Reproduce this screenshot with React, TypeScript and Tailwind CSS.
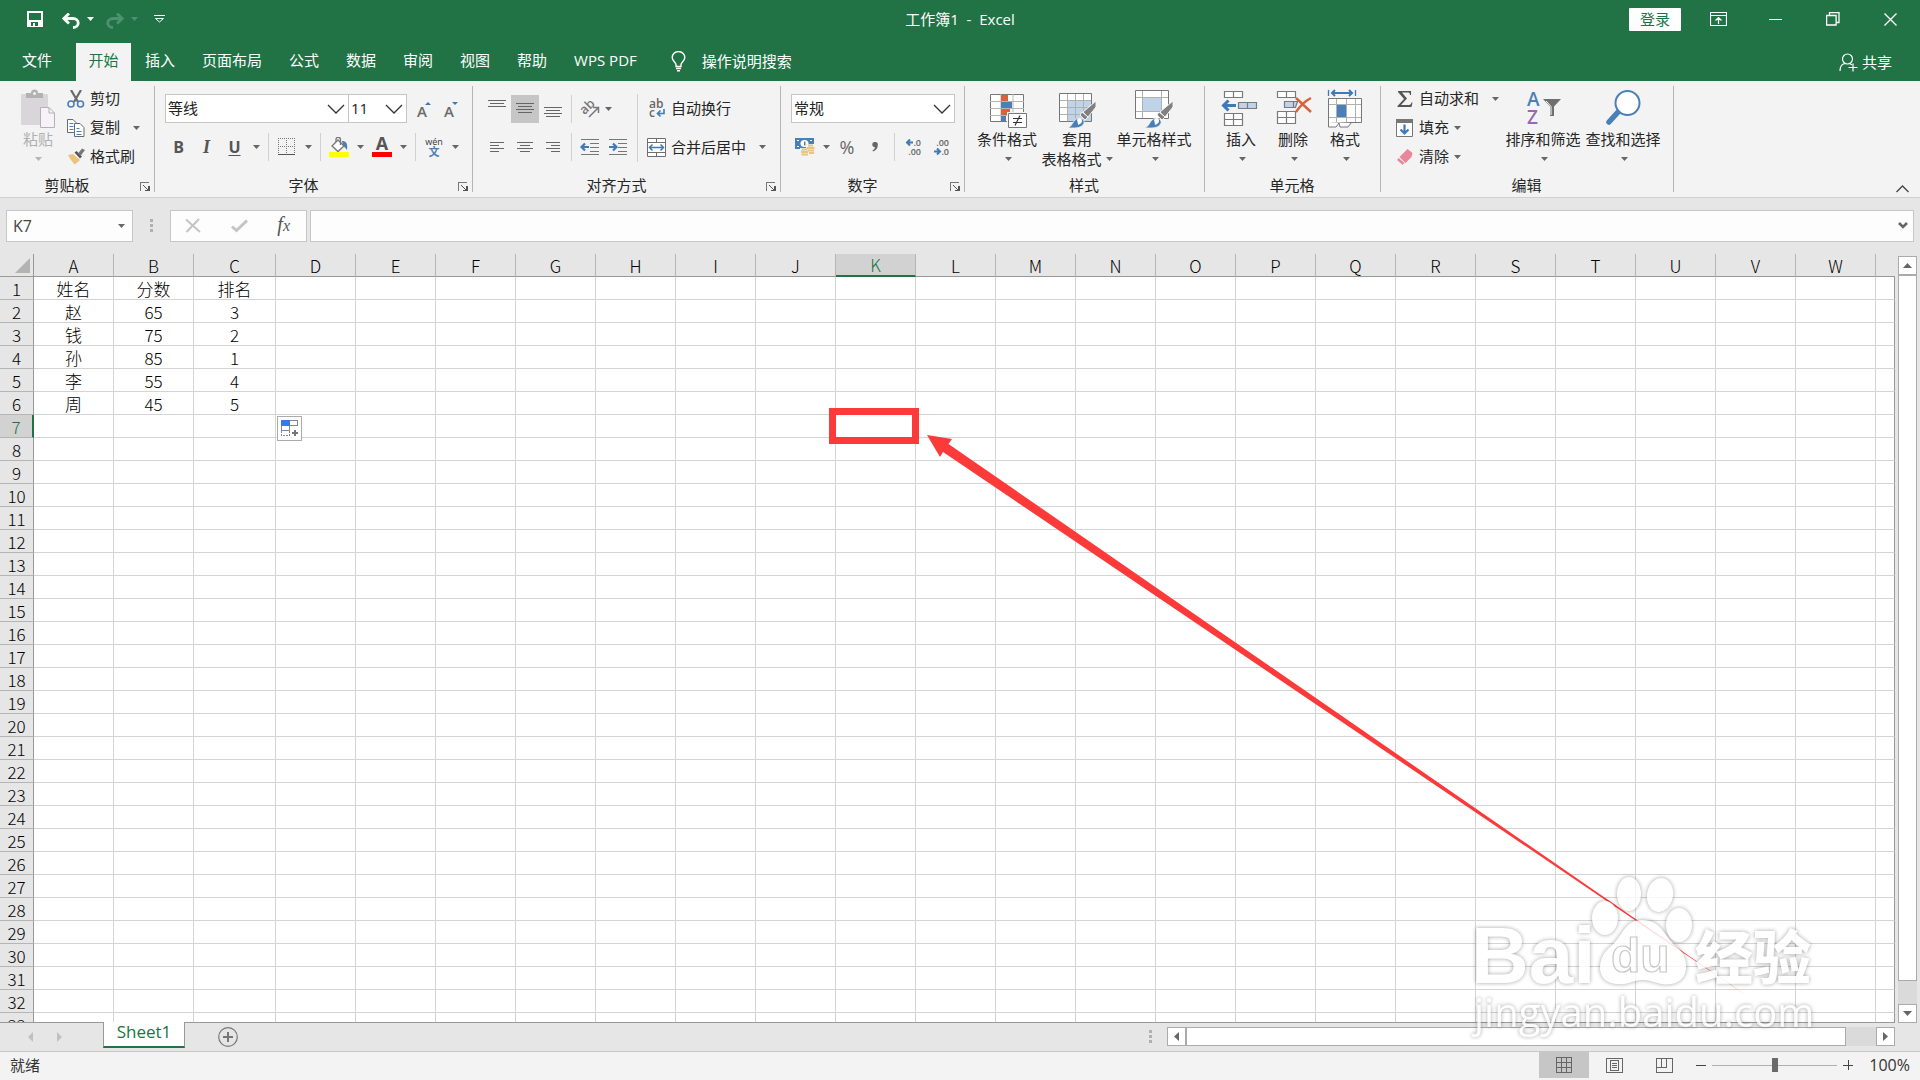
import React, { useState } from 'react';

interface IconProps {
  className?: string;
}

const columns = 'ABCDEFGHIJKLMNOPQRSTUVW'.split('');
const rowNumbers = Array.from({ length: 33 }, (_, i) => i + 1);

const cells: string[][] = [
  ['姓名', '分数', '排名'],
  ['赵', '65', '3'],
  ['钱', '75', '2'],
  ['孙', '85', '1'],
  ['李', '55', '4'],
  ['周', '45', '5']
];

const tabs = ['插入', '页面布局', '公式', '数据', '审阅', '视图', '帮助', 'WPS PDF'];

/* ---------- small shared pieces ---------- */

const Caret = ({ className = 'text-[#666]' }: IconProps) => (
  <svg width="7" height="4" viewBox="0 0 7 4" className={`shrink-0 ${className}`}>
    <path d="M0 0h7L3.5 4z" fill="currentColor" />
  </svg>
);

const CaretButton = ({ label, className = 'w-4' }: { label: string; className?: string }) => (
  <button aria-label={label} className={`flex h-7 items-center justify-center ${className}`}>
    <Caret />
  </button>
);

const Divider = ({ className = 'h-7' }: IconProps) => <div className={`w-px shrink-0 bg-[#d0d0d0] ${className}`}></div>;

const Grip = () => (
  <div className="flex flex-col gap-[2px]">
    <span className="h-[3px] w-[3px] bg-[#b0b0b0]"></span>
    <span className="h-[3px] w-[3px] bg-[#b0b0b0]"></span>
    <span className="h-[3px] w-[3px] bg-[#b0b0b0]"></span>
  </div>
);

const ToolButton = ({
  label,
  className = 'w-7',
  children
}: {
  label: string;
  className?: string;
  children: React.ReactNode;
}) => (
  <button aria-label={label} className={`flex h-7 shrink-0 items-center justify-center ${className}`}>
    {children}
  </button>
);

const Picker = ({
  label,
  options,
  className
}: {
  label: string;
  options: string[];
  className: string;
}) => (
  <div className={`relative h-[29px] ${className}`}>
    <select
      aria-label={label}
      className="h-full w-full appearance-none border border-[#c6c6c6] bg-white pl-[2px] text-[15px] text-[#222]"
    >
      {options.map((option) => (
        <option key={option}>{option}</option>
      ))}
    </select>
    <svg width="18" height="10" viewBox="0 0 18 10" className="pointer-events-none absolute right-1 top-[10px]">
      <path d="M1 1l8 8 8-8" fill="none" stroke="#333" strokeWidth="1.3" />
    </svg>
  </div>
);

const Group = ({
  title,
  launcher = false,
  className,
  children
}: {
  title: string;
  launcher?: boolean;
  className: string;
  children: React.ReactNode;
}) => (
  <section className={`my-[5px] flex shrink-0 flex-col border-r border-[#b5b5b5] ${className}`}>
    <div className="flex flex-1">{children}</div>
    <div className="flex h-[14px] items-center justify-center leading-[14px]">
      <span className={launcher ? 'flex-1 pr-[6px] text-center' : 'pr-px'}>{title}</span>
      {launcher && (
        <button aria-label={`${title}设置`} className="mr-[3px] mt-1">
          <svg width="11" height="10" viewBox="0 0 11 10" shapeRendering="crispEdges">
            <path d="M0.500 9V0.500H9" fill="none" stroke="#777" />
            <path d="M3 3h1v1h1v1h1v1h1v1h1V4h2v5H5V8h2V7H6V6H5V5H4V4H3z" fill="#555" />
          </svg>
        </button>
      )}
    </div>
  </section>
);

const BigButton = ({
  label,
  second,
  className,
  children
}: {
  label: string;
  second?: string;
  className: string;
  children: React.ReactNode;
}) => (
  <button className={`flex shrink-0 flex-col items-center pt-[3px] leading-[19px] ${className}`}>
    {children}
    <span className="mt-px whitespace-nowrap">{label}</span>
    <span className={second ? 'flex h-5 items-center gap-1 whitespace-nowrap' : 'flex h-5 items-center pl-[3px]'}>
      {second}
      <Caret />
    </span>
  </button>
);

/* ---------- icons ---------- */

const SaveIcon = () => (
  <svg width="16" height="16" viewBox="0 0 16 16" shapeRendering="crispEdges">
    <path d="M0 0h16v16H0zM2 2v7h12V2zM4 11v4h2v-3h2v3h3v-4z" fill="#fff" fillRule="evenodd" />
  </svg>
);

const UndoIcon = ({ className = '' }: IconProps) => (
  <svg width="18" height="16" viewBox="0 0 18 16" className={className}>
    <path d="M7 0.500L1.800 5.500 7 10.500M2.500 5.500H11a5 4.300 0 0 1 0 9" fill="none" stroke="currentColor" strokeWidth="2.800" />
  </svg>
);

const BulbIcon = () => (
  <svg width="15" height="21" viewBox="0 0 15 21" fill="none" stroke="#fff" strokeWidth="1.400">
    <path d="M5 15.500v-2C5 11.500 1.200 10 1.200 6.500a6.200 5.800 0 0 1 12.600 0C13.800 10 10 11.500 10 13.500v2zM5 17.500h5M6 19.800h3" />
  </svg>
);

const ShareIcon = () => (
  <svg width="19" height="19" viewBox="0 0 19 19" fill="none" stroke="#fff" strokeWidth="1.200">
    <circle cx="8.500" cy="6" r="5" />
    <path d="M1 18c0-4 2-7 5-7.500M11 10.800l2 1M14 10.500v8M9.500 14.500h9" />
  </svg>
);

const PasteIcon = () => (
  <svg width="36" height="40" viewBox="0 0 36 40">
    <rect x="1" y="5" width="27" height="31" rx="1" fill="#d9d6d9" />
    <path d="M6 9V4h5a3.500 3.500 0 0 1 7 0h5v5z" fill="#b3b1b3" />
    <circle cx="14.500" cy="4.500" r="1.500" fill="#f3f3f3" />
    <path d="M20.500 18.500H29l5.500 5.500v14.500h-14z" fill="#f6f2f8" stroke="#b3b1b3" />
    <path d="M29 18.500V24h5.500" fill="none" stroke="#b3b1b3" />
  </svg>
);

const CutIcon = () => (
  <svg width="18" height="18" viewBox="0 0 18 18">
    <path d="M4 0l7 12M14 0L7 12" stroke="#6a6a6a" strokeWidth="2.200" />
    <circle cx="4" cy="14" r="3" fill="none" stroke="#4a80ba" strokeWidth="1.600" />
    <circle cx="13.500" cy="14" r="3" fill="none" stroke="#4a80ba" strokeWidth="1.600" />
  </svg>
);

const CopyIcon = () => (
  <svg width="18" height="18" viewBox="0 0 18 18" fill="#fff" stroke="#6a6a6a">
    <path d="M0.500 0.500H6L9.500 4v9.500h-9z" />
    <path d="M2.500 4.500h4M2.500 7.500h4M2.500 10.500h4" stroke="#4a80ba" />
    <path d="M7.500 4.500H13L17 8.500v9H7.500z" />
    <path d="M9.500 9.500h3M9.500 12.500h5M9.500 15.500h5" stroke="#4a80ba" />
  </svg>
);

const FormatPainterIcon = () => (
  <svg width="18" height="17" viewBox="0 0 18 17">
    <path d="M1 7l5-1 7 6-5 4.500C5 14 3 11 1 7z" fill="#ecc27c" />
    <path d="M7.500 4.500l5.500 6 2-2L9.500 3z" fill="#555" />
    <path d="M11 5.500l4-5 3 1.500-4.500 6z" fill="#777" />
  </svg>
);

const GrowIcon = ({ down = false }: { down?: boolean }) => (
  <svg width="16" height="18" viewBox="0 0 16 18" className="overflow-visible">
    <text x="0" y="17" fontFamily="Open Sans" fontSize="15" fontWeight="600" fill="#6a6a6a">A</text>
    <path d={down ? 'M8 2h6l-3 3z' : 'M8 5h6l-3-3z'} fill="#3f77b5" />
  </svg>
);

const BordersIcon = () => (
  <svg width="18" height="18" viewBox="0 0 18 18" fill="none" stroke="#777" shapeRendering="crispEdges">
    <path d="M0 0.500h17M0 8.500h17M0.500 0v16M8.500 0v16M16.500 0v16" strokeDasharray="1 1" />
    <path d="M0 16.500h17" stroke="#555" />
  </svg>
);

const FillColorIcon = () => (
  <svg width="20" height="20" viewBox="0 0 20 20">
    <path d="M13 4c4 0 6 2 5 9-1-1-2-3-4-4z" fill="#4a80ba" />
    <path d="M9 3l6 6-6 5.500L3 9z" fill="#fff" stroke="#777" strokeWidth="1.300" />
    <path d="M7 5V2.500a2 2 0 0 1 4.500 0V8" fill="none" stroke="#777" strokeWidth="1.300" />
    <path d="M0 15h20v5H0z" fill="#ff0" />
  </svg>
);

const FontColorIcon = () => (
  <svg width="20" height="20" viewBox="0 0 20 20" className="overflow-visible">
    <text x="10" y="13" textAnchor="middle" fontFamily="Open Sans" fontSize="18" fontWeight="700" fill="#555">A</text>
    <path d="M0 15h20v5H0z" fill="#f00" />
  </svg>
);

const PhoneticIcon = () => (
  <svg width="18" height="20" viewBox="0 0 18 20" className="overflow-visible">
    <text x="9" y="8" textAnchor="middle" fontFamily="Open Sans" fontSize="9" fill="#333">wén</text>
    <text x="9" y="19" textAnchor="middle" fontFamily="Noto Sans CJK SC" fontSize="11" fontWeight="700" fill="#4a80ba">文</text>
  </svg>
);

const linePaths: Record<string, string> = {
  top: 'M0 5.500h18M2 8.500h14M0 11.500h18',
  middle: 'M0 4.500h18M2 7.500h14M0 10.500h18M2 13.500h14',
  bottom: 'M0 8.500h18M2 11.500h14M0 14.500h18M2 17.500h14',
  left: 'M2 4.500h14M2 7.500h9M2 10.500h14M2 13.500h9',
  center: 'M1 4.500h16M4 7.500h10M1 10.500h16M4 13.500h10',
  right: 'M2 4.500h14M7 7.500h9M2 10.500h14M7 13.500h9'
};

const LinesIcon = ({ kind }: { kind: string }) => (
  <svg width="18" height="19" viewBox="0 0 18 19" stroke="#666" shapeRendering="crispEdges">
    <path d={linePaths[kind]} />
  </svg>
);

const OrientationIcon = () => (
  <svg width="20" height="18" viewBox="0 0 20 18" className="overflow-visible">
    <text x="2" y="13" transform="rotate(-45 6 11)" fontFamily="Open Sans" fontSize="13" fontWeight="600" fill="#777">ab</text>
    <path d="M9 17l9-9M13 7.500h5.500V13" fill="none" stroke="#777" strokeWidth="1.500" />
  </svg>
);

const IndentIcon = ({ right = false }: { right?: boolean }) => (
  <svg width="20" height="18" viewBox="0 0 20 18">
    <path d="M1 1.500h18M10 5.500h9M10 9.500h9M10 13.500h9M1 16.500h18" stroke="#777" shapeRendering="crispEdges" />
    <path d={right ? 'M1 9h7M5 5.500L8.500 9 5 12.500' : 'M9 9H2M5 5.500L1.500 9 5 12.500'} fill="none" stroke="#4079b8" strokeWidth="2.200" />
  </svg>
);

const WrapIcon = () => (
  <svg width="18" height="20" viewBox="0 0 18 20" className="overflow-visible">
    <text x="1" y="9" fontFamily="Open Sans" fontSize="12" fontWeight="600" fill="#666">ab</text>
    <text x="1" y="18" fontFamily="Open Sans" fontSize="12" fontWeight="600" fill="#666">c</text>
    <path d="M16 10v4.500H9.500M12.500 11.500l-3 3 3 3" fill="none" stroke="#4079b8" strokeWidth="1.600" />
  </svg>
);

const MergeIcon = () => (
  <svg width="19" height="19" viewBox="0 0 19 19" fill="#fff" stroke="#6f6f6f">
    <path d="M0.500 0.500h18v18H0.500zM0.500 4.500h18M0.500 14.500h18M9.500 0v4.500M9.500 14.500v4" />
    <path d="M3 9.500h13M5.500 6.500l-3 3 3 3M13.500 6.500l3 3-3 3" fill="none" stroke="#4079b8" strokeWidth="1.500" />
  </svg>
);

const CurrencyIcon = () => (
  <svg width="20" height="20" viewBox="0 0 20 20">
    <path d="M0 1h19v11H0z" fill="#4a80ba" />
    <path d="M2 3.500h2M2 9.500h2M15 3.500h2" stroke="#fff" />
    <ellipse cx="9.500" cy="6.500" rx="4" ry="3.500" fill="#fff" />
    <path d="M9 4.500h1.500v4H9z" fill="#4a80ba" />
    <path d="M11 7h9v12H5v-8h6z" fill="#f3f3f3" />
    <path d="M13 8.500h5M12 11h7.500M13 13.500h6M6.500 12.500h6M6 15h7M6.500 17.500h6.500M14 16h5" stroke="#ecc27c" strokeWidth="1.800" />
  </svg>
);

const DecimalIcon = ({ less = false }: { less?: boolean }) => (
  <svg width="18" height="18" viewBox="0 0 18 18" className="overflow-visible">
    <text x="16" y="8" textAnchor="end" fontFamily="Open Sans" fontSize="9" fontWeight="600" fill="#666">{less ? '.00' : '.0'}</text>
    <text x="16" y="17" textAnchor="end" fontFamily="Open Sans" fontSize="9" fontWeight="600" fill="#666">{less ? '.0' : '.00'}</text>
    <path
      d={less ? 'M1 13.500h5M4 10.500l3 3-3 3' : 'M8 4.500H3M5 1.500l-3 3 3 3'}
      fill="none"
      stroke="#4079b8"
      strokeWidth="2"
    />
  </svg>
);

const BrushShape = () => (
  <g>
    <path d="M39 12v6L31 28l-5-5z" fill="#808080" stroke="#f3f3f3" />
    <path d="M25 23l6 5-3 3-5-5z" fill="#808080" stroke="#f3f3f3" />
    <path d="M11 39c4-2 4-5 7-8 3-3 8-2 9 1 1 4-4 7-9 7z" fill="#4a80ba" stroke="#f3f3f3" strokeWidth="0.800" />
    <path d="M20 31c1-2 4-2.500 5 0 .5 2-1 4-4 5 0-2-.5-3-1-5z" fill="#fff" />
  </g>
);

const ConditionalIcon = () => (
  <svg width="40" height="40" viewBox="0 0 40 40">
    <path d="M3.500 5.500h33v27h-33z" fill="#fff" stroke="#777" />
    <path d="M3 12.500h34M3 19.500h34M3 26.500h34M14 5v27M26 5v27" stroke="#b5b5b5" />
    <path d="M14 6h7v6h-7zM14 20h9v6h-9z" fill="#d9623b" />
    <path d="M14 13h11v6H14zM14 27h5v5h-5z" fill="#4a80ba" />
    <path d="M20 23h20v17H20z" fill="#f3f3f3" />
    <path d="M21.500 24.500h18v14h-18z" fill="#fff" stroke="#777" />
    <path d="M26 29.500h9M26 33.500h9M33 26.500l-5 10" stroke="#333" strokeWidth="1.200" />
  </svg>
);

const TableFormatIcon = () => (
  <svg width="40" height="40" viewBox="0 0 40 40">
    <path d="M2.500 4.500h32v28h-32z" fill="#fff" stroke="#777" />
    <path d="M11 12h23v20H11z" fill="#c0d4e9" />
    <path d="M3 11.500h31M3 18.500h31M3 25.500h31M10.500 5v27M18.500 5v27M26.500 5v27" stroke="#b0b0b0" />
    <BrushShape />
  </svg>
);

const CellStyleIcon = () => (
  <svg width="40" height="40" viewBox="0 0 40 40">
    <path d="M1.500 1.500h33v28h-33z" fill="#fff" stroke="#777" />
    <path d="M2 8.500h32M2 22.500h32M8.500 2v27M27.500 2v27" stroke="#b0b0b0" />
    <path d="M9 9h18v13H9z" fill="#c0d4e9" />
    <BrushShape />
  </svg>
);

const InsertIcon = () => (
  <svg width="40" height="40" viewBox="2 0 40 40" fill="#fff" stroke="#7a7a7a" strokeWidth="1.200">
    <path d="M5.500 2.500h18v6h-18zM14.500 2.500v6M5.500 24.500h18v12h-18zM5.500 30.500h18M14.500 24.500v12" />
    <path d="M19.500 13.500h18v6h-18zM28.500 13.500v6" fill="#c0d4e9" />
    <path d="M17 16.500H5M9.500 11.500l-5 5 5 5" fill="none" stroke="#4079b8" strokeWidth="3" />
  </svg>
);

const DeleteIcon = () => (
  <svg width="40" height="40" viewBox="0 0 40 40" fill="#fff" stroke="#7a7a7a" strokeWidth="1.200">
    <path d="M4.500 2.500h18v6h-18zM13.500 2.500v6M4.500 22.500h18v12h-18zM4.500 28.500h18M13.500 22.500v12" />
    <path d="M11.500 12.500h13l-2 6h-11zM20.500 12.500v6" fill="#c0d4e9" />
    <path d="M23 9l15 14M38 9c-6 3-11 8-15 14" fill="none" stroke="#d9623b" strokeWidth="2.400" />
  </svg>
);

const FormatCellsIcon = () => (
  <svg width="40" height="40" viewBox="0 0 40 40">
    <path d="M3.500 1v6M30.500 1v6" stroke="#4079b8" strokeWidth="1.300" />
    <path d="M7 4h20M10 1L7 4l3 3M24 1l3 3-3 3" fill="none" stroke="#4079b8" strokeWidth="2" />
    <path d="M3.500 9.500h33v24h-33z" fill="#fff" stroke="#777" />
    <path d="M4 15.500h32M4 28.500h32M11.500 10v23M21.500 10v23M30.500 10v23" stroke="#b0b0b0" />
    <path d="M12 16h9v12h-9z" fill="#4a80ba" />
    <path d="M3.500 33v5H11l3-4 1 4h8l3-4" fill="#fff" stroke="#777" />
  </svg>
);

const FillDownIcon = () => (
  <svg width="18" height="18" viewBox="0 0 18 18">
    <path d="M0.500 0.500h16v17H0.500z" fill="#fff" stroke="#777" />
    <path d="M0 0h17v4H0z" fill="#777" />
    <path d="M8.500 5.500v9M4.500 10.500l4 4 4-4" fill="none" stroke="#4079b8" strokeWidth="2.200" />
  </svg>
);

const EraserIcon = () => (
  <svg width="18" height="17" viewBox="0 0 18 17">
    <path d="M11.500 1l5 4-1 4-6 6-6-6z" fill="#e8869a" />
    <path d="M2.700 10l5.800 5-2 1.800L1 12z" fill="#e8869a" />
  </svg>
);

const SortIcon = () => (
  <svg width="40" height="40" viewBox="0 0 40 40" className="overflow-visible">
    <text x="4" y="17" fontFamily="Open Sans" fontSize="19" fontWeight="600" fill="#4a80ba">A</text>
    <text x="4" y="35" fontFamily="Open Sans" fontSize="19" fontWeight="600" fill="#9a66b5">Z</text>
    <path d="M20 10h18l-7 7.500V27h-4v-9.500z" fill="#6f6f6f" />
    <path d="M23 12l5 5.500V26" fill="none" stroke="#fff" />
  </svg>
);

const FindIcon = () => (
  <svg width="40" height="40" viewBox="0 0 40 40">
    <path d="M16 22L6 33" stroke="#4a80ba" strokeWidth="5.500" strokeLinecap="round" />
    <circle cx="24.500" cy="14" r="12" fill="#fff" stroke="#4a80ba" strokeWidth="2" />
  </svg>
);

/* ---------- page sections ---------- */

const TitleBar = () => (
  <header className="grid h-[43px] shrink-0 grid-cols-[1fr_auto_1fr] pb-[5px] text-white">
    <div className="flex items-center pl-[27px]">
      <button aria-label="保存"><SaveIcon /></button>
      <button aria-label="撤消" className="ml-[19px] mt-1"><UndoIcon /></button>
      <button aria-label="撤消列表" className="ml-[7px]"><Caret className="text-white" /></button>
      <button aria-label="恢复" className="ml-3 mt-1 text-[#4f9070]"><UndoIcon className="-scale-x-100" /></button>
      <button aria-label="恢复列表" className="ml-[7px]"><Caret className="text-[#4f9070]" /></button>
      <button aria-label="自定义快速访问工具栏" className="ml-4">
        <svg width="11" height="8" viewBox="0 0 11 8" fill="none" stroke="#fff">
          <path d="M0 0.500h11M1.500 3.500h8l-4 3.500z" />
        </svg>
      </button>
    </div>
    <h1 className="flex items-center whitespace-pre text-[15px]">工作簿1  -  Excel</h1>
    <div className="flex items-center justify-end pr-[23px]">
      <button className="h-[23px] w-[52px] rounded-[1px] bg-white text-[15px] leading-[23px] text-[#217346]">登录</button>
      <button aria-label="功能区显示选项" className="ml-[29px]">
        <svg width="17" height="14" viewBox="0 0 17 14" fill="none" stroke="#fff">
          <path d="M0.500 0.500h16v13H0.500zM1 3.500h15M8.500 12V6M5.500 8.500l3-3 3 3" strokeWidth="1.200" />
        </svg>
      </button>
      <button aria-label="最小化" className="ml-[42px] h-[1px] w-[13px] bg-white"></button>
      <button aria-label="向下还原" className="ml-11">
        <svg width="14" height="14" viewBox="0 0 14 14" fill="none" stroke="#fff" strokeWidth="1.300">
          <path d="M0.600 3.500h9.500v9.500H0.600zM3.500 3.500V0.600h9.500V10.500h-3" />
        </svg>
      </button>
      <button aria-label="关闭" className="ml-11">
        <svg width="13" height="13" viewBox="0 0 13 13" stroke="#fff" strokeWidth="1.400">
          <path d="M0.500 0.500l12 12M12.500 0.500l-12 12" />
        </svg>
      </button>
    </div>
  </header>
);

const TabBar = () => (
  <nav className="flex h-[38px] shrink-0 items-stretch whitespace-nowrap pr-7 text-[15px] text-white">
    <button className="w-[76px] pb-1 pr-[2px]">文件</button>
    <button className="w-[55px] bg-[#f3f3f3] pb-1 text-[#217346]">开始</button>
    <div className="flex gap-[27px] pb-1 pl-[14px]">
      {tabs.map((tab) => (
        <button key={tab}>{tab}</button>
      ))}
    </div>
    <button className="flex items-center gap-4 pb-[2px] pl-[34px]">
      <BulbIcon />
      操作说明搜索
    </button>
    <button className="ml-auto flex items-center gap-1">
      <ShareIcon />
      共享
    </button>
  </nav>
);

const Ribbon = () => (
  <div className="flex h-[117px] shrink-0 border-b border-[#d0d0d0] bg-[#f3f3f3] text-[15px] text-[#262626]">
    <Group title="剪贴板" launcher className="w-[155px]">
      <button className="ml-[20px] flex w-9 flex-col items-center pt-[3px] leading-[19px] text-[#b0b0b0]">
        <PasteIcon />
        <span className="mt-px">粘贴</span>
        <span className="flex h-5 items-center"><Caret className="text-[#b5b5b5]" /></span>
      </button>
      <div className="-mt-[2px] ml-[11px] flex flex-col">
        <button className="flex h-[29px] items-center gap-[5px]"><CutIcon />剪切</button>
        <div className="flex h-[29px] items-center">
          <button className="flex items-center gap-[5px]"><CopyIcon />复制</button>
          <CaretButton label="复制选项" className="ml-[6px] w-5" />
        </div>
        <button className="flex h-[29px] items-center gap-[5px]"><FormatPainterIcon />格式刷</button>
      </div>
    </Group>

    <Group title="字体" launcher className="w-[318px]">
      <div className="flex flex-col gap-[10px] pl-[10px] pt-2">
        <div className="flex items-center">
          <Picker label="字体" options={['等线', '宋体', '微软雅黑']} className="w-[184px]" />
          <Picker label="字号" options={['11', '12', '14']} className="-ml-px w-[59px]" />
          <ToolButton label="增大字号" className="ml-1 w-[27px]"><GrowIcon /></ToolButton>
          <ToolButton label="减小字号" className="w-[27px]"><GrowIcon down /></ToolButton>
        </div>
        <div className="flex items-center">
          <ToolButton label="加粗" className="w-[27px]"><b className="text-base text-[#555]">B</b></ToolButton>
          <ToolButton label="倾斜" className="w-[29px]">
            <i className="font-['Liberation_Serif',serif] text-lg font-bold text-[#555]">I</i>
          </ToolButton>
          <ToolButton label="下划线" className="w-[27px]"><b className="text-base text-[#555] underline underline-offset-2">U</b></ToolButton>
          <CaretButton label="下划线样式" />
          <Divider className="ml-[4px] h-7" />
          <ToolButton label="边框" className="ml-1 w-7"><BordersIcon /></ToolButton>
          <CaretButton label="边框样式" className="w-[14px]" />
          <Divider className="ml-[5px] h-7" />
          <ToolButton label="填充颜色" className="ml-1 w-7"><FillColorIcon /></ToolButton>
          <CaretButton label="填充颜色选项" className="w-[14px]" />
          <ToolButton label="字体颜色" className="w-[29px]"><FontColorIcon /></ToolButton>
          <CaretButton label="字体颜色选项" className="w-[14px]" />
          <Divider className="ml-[5px] h-7" />
          <ToolButton label="拼音" className="ml-1 w-7"><PhoneticIcon /></ToolButton>
          <CaretButton label="拼音选项" className="w-[14px]" />
        </div>
      </div>
    </Group>

    <Group title="对齐方式" launcher className="w-[308px]">
      <div className="flex flex-col gap-[10px] pl-[10px] pt-2">
        <div className="flex h-[29px] items-center">
          <ToolButton label="顶端对齐"><span className="pb-2"><LinesIcon kind="top" /></span></ToolButton>
          <ToolButton label="垂直居中" className="w-7 bg-[#c6c6c6]"><LinesIcon kind="middle" /></ToolButton>
          <ToolButton label="底端对齐"><LinesIcon kind="bottom" /></ToolButton>
          <Divider className="mx-1 h-7" />
          <ToolButton label="方向"><OrientationIcon /></ToolButton>
          <CaretButton label="方向选项" className="w-2" />
        </div>
        <div className="flex items-center">
          <ToolButton label="左对齐"><LinesIcon kind="left" /></ToolButton>
          <ToolButton label="居中"><LinesIcon kind="center" /></ToolButton>
          <ToolButton label="右对齐"><LinesIcon kind="right" /></ToolButton>
          <Divider className="mx-1 h-7" />
          <ToolButton label="减少缩进量"><IndentIcon /></ToolButton>
          <ToolButton label="增加缩进量"><IndentIcon right /></ToolButton>
        </div>
      </div>
      <Divider className="ml-[5px] mt-2 h-[68px]" />
      <div className="flex flex-col gap-[10px] pl-[9px] pt-2">
        <button className="flex h-[29px] items-center gap-[5px]"><span className="pl-px"><WrapIcon /></span>自动换行</button>
        <div className="flex items-center">
          <button className="flex items-center gap-[5px]"><MergeIcon />合并后居中</button>
          <CaretButton label="合并选项" className="ml-2 w-4" />
        </div>
      </div>
    </Group>

    <Group title="数字" launcher className="w-[184px]">
      <div className="flex flex-col gap-[10px] pl-[10px] pt-2">
        <Picker label="数字格式" options={['常规', '数值', '货币']} className="w-[164px]" />
        <div className="flex items-center">
          <ToolButton label="会计数字格式"><CurrencyIcon /></ToolButton>
          <CaretButton label="会计格式选项" className="w-[14px]" />
          <ToolButton label="百分比样式"><span className="text-lg text-[#666]">%</span></ToolButton>
          <ToolButton label="千位分隔样式">
            <svg width="6" height="10" viewBox="0 0 6 10">
              <path d="M3 0a2.500 2.500 0 0 1 2.800 3C5.800 6 4 8.500 1 9.500L0.500 8.500C2 7.500 3 6.500 3 5.300 1.500 5.300 0.300 4 0.300 2.700A2.500 2.500 0 0 1 3 0z" fill="#666" />
            </svg>
          </ToolButton>
          <Divider className="mx-[5px] h-7" />
          <ToolButton label="增加小数位数"><DecimalIcon /></ToolButton>
          <ToolButton label="减少小数位数"><DecimalIcon less /></ToolButton>
        </div>
      </div>
    </Group>

    <Group title="样式" className="w-[240px]">
      <BigButton label="条件格式" className="ml-[9px] w-[66px]"><ConditionalIcon /></BigButton>
      <BigButton label="套用" second="表格格式" className="w-[74px]"><TableFormatIcon /></BigButton>
      <BigButton label="单元格样式" className="w-20"><CellStyleIcon /></BigButton>
    </Group>

    <Group title="单元格" className="w-[176px]">
      <BigButton label="插入" className="ml-[10px] w-[52px]"><InsertIcon /></BigButton>
      <BigButton label="删除" className="w-[52px]"><DeleteIcon /></BigButton>
      <BigButton label="格式" className="w-[52px]"><FormatCellsIcon /></BigButton>
    </Group>

    <Group title="编辑" className="w-[293px]">
      <div className="-mt-[2px] flex w-[124px] shrink-0 flex-col whitespace-nowrap pl-[15px]">
        <div className="flex h-[29px] items-center">
          <button className="flex items-center gap-[5px]">
            <svg width="18" height="18" viewBox="0 0 18 18">
              <path d="M2 1h13v4h-1c0-2-1-2.500-2-2.500H6l5 6-6 6.500h8c1.500 0 2-1 2.500-2.500h1L15.500 17H1.500v-1L8 9 2 2z" fill="#555" />
            </svg>
            自动求和
          </button>
          <CaretButton label="自动求和选项" className="ml-2 w-4" />
        </div>
        <button className="flex h-[29px] items-center gap-[5px]"><FillDownIcon />填充<Caret /></button>
        <button className="flex h-[29px] items-center gap-[5px]"><EraserIcon />清除<Caret /></button>
      </div>
      <BigButton label="排序和筛选" className="w-[76px]"><SortIcon /></BigButton>
      <BigButton label="查找和选择" className="ml-1 w-[76px]"><FindIcon /></BigButton>
    </Group>

    <button aria-label="折叠功能区" className="mb-1 ml-auto mr-[11px] self-end">
      <svg width="13" height="8" viewBox="0 0 13 8" fill="none" stroke="#444" strokeWidth="1.300">
        <path d="M0.500 7l6-6 6 6" />
      </svg>
    </button>
  </div>
);

const FormulaBar = ({ cell, onCellChange }: { cell: string; onCellChange: (value: string) => void }) => (
  <div className="flex h-14 shrink-0 items-center pb-[1px] pl-[6px] pr-[6px]">
    <div className="flex h-8 w-[127px] items-center border border-[#c6c6c6] bg-[#fdfdfd] pl-[6px] pr-[7px]">
      <input
        aria-label="名称框"
        value={cell}
        onChange={(e) => onCellChange(e.target.value)}
        className="min-w-0 flex-1 text-base text-[#444] outline-none"
      />
      <Caret />
    </div>
    <div className="flex w-[37px] justify-center"><Grip /></div>
    <div className="flex h-8 w-[137px] items-center justify-between border border-[#c6c6c6] bg-[#fdfdfd] px-[14px]">
      <button aria-label="取消">
        <svg width="16" height="15" viewBox="0 0 16 15" stroke="#c4c4c4" strokeWidth="2">
          <path d="M1 1.500l14 12.500M14 1L1.500 14" />
        </svg>
      </button>
      <button aria-label="输入">
        <svg width="17" height="14" viewBox="0 0 17 14" fill="none" stroke="#c4c4c4" strokeWidth="3">
          <path d="M1 7.500l4.500 4L16 1.500" />
        </svg>
      </button>
      <button aria-label="插入函数" className="pr-[2px] font-['Liberation_Serif',serif] text-xl italic leading-5 text-[#555]">
        f<span className="text-base">x</span>
      </button>
    </div>
    <div className="ml-[3px] flex h-8 flex-1 items-center border border-[#c6c6c6] bg-[#fdfdfd] pl-2 pr-[5px]">
      <input aria-label="编辑栏" className="min-w-0 flex-1 text-[15px] outline-none" />
      <button aria-label="展开编辑栏">
        <svg width="10" height="7" viewBox="0 0 10 7" fill="none" stroke="#666" strokeWidth="2.600">
          <path d="M1 1l4 4 4-4" />
        </svg>
      </button>
    </div>
  </div>
);

const Annotation = () => (
  <>
    <div className="absolute left-[829px] top-[154px] h-9 w-[90px] border-[7px] border-[#fc3a3a] bg-white"></div>
    <svg width="830" height="570" viewBox="920 430 830 570" className="absolute left-[920px] top-[176px]">
      <path d="M927 435l25 4-3.500 5L1747 996 943 452l-3 5z" fill="#fc3a3a" />
    </svg>
  </>
);

const Sheet = () => (
  <main className="flex min-h-0 flex-1 pr-[3px]">
    <div className="relative min-w-0 flex-1 overflow-hidden border-b border-[#999]">
      <table className="w-full table-fixed border-separate border-spacing-0 font-['Noto_Sans_CJK_SC',sans-serif] text-[17px] leading-5 text-black">
        <colgroup>
          <col className="w-[34px]" />
          {columns.map((name) => (
            <col key={name} className={name === 'C' ? 'w-[82px]' : 'w-20'} />
          ))}
          <col />
        </colgroup>
        <thead>
          <tr>
            <th aria-label="全选" className="h-[23px] border-b border-r border-[#999] p-0">
              <svg width="15" height="15" viewBox="0 0 15 15" className="ml-auto mr-[3px]">
                <path d="M15 0v15H0z" fill="#b3b3b3" />
              </svg>
            </th>
            {columns.map((name) => (
              <th
                key={name}
                className={
                  name === 'K'
                    ? 'h-[23px] border-b-2 border-r border-b-[#217346] border-r-[#b5b5b5] bg-[#d2d2d2] p-0 pt-px font-light text-[#217346]'
                    : 'h-[23px] border-b border-r border-b-[#999] border-r-[#b5b5b5] p-0 pt-[2px] font-light'
                }
              >
                {name}
              </th>
            ))}
            <th className="h-[23px] border-b border-[#999] p-0"></th>
          </tr>
        </thead>
        <tbody>
          {rowNumbers.map((n) => (
            <tr key={n} className="bg-white">
              <th
                className={
                  n === 7
                    ? 'h-[23px] border-b border-r-2 border-b-[#b5b5b5] border-r-[#217346] bg-[#d2d2d2] p-0 pt-[2px] font-light text-[#217346]'
                    : 'h-[23px] border-b border-r border-b-[#b5b5b5] border-r-[#999] bg-[#e6e6e6] p-0 pt-[2px] font-light'
                }
              >
                {n}
              </th>
              {columns.map((name, i) => (
                <td key={name} className="h-[23px] border-b border-r border-[#d4d4d4] p-0 pt-[2px] text-center font-light">
                  {cells[n - 1]?.[i]}
                </td>
              ))}
              <td className="h-[23px] border-b border-r border-b-[#d4d4d4] border-r-[#999] p-0"></td>
            </tr>
          ))}
        </tbody>
      </table>

      {/* Autofill options tag */}
      <button aria-label="自动填充选项" className="absolute left-[277px] top-[162px] flex h-[25px] w-[25px] items-center justify-center border border-[#ababab] bg-white">
        <svg width="17" height="17" viewBox="0 0 17 17" fill="none" stroke="#888" shapeRendering="crispEdges">
          <path d="M0.500 0.500h16v5H0.500zM0.500 5.500h8v5h-8z" />
          <path d="M0.500 0.500h8v5h-8z" fill="#3b78e7" stroke="#3b78e7" />
          <path d="M0.500 11v4.500h8V11" strokeDasharray="2 1" />
          <path d="M13.500 10v6M10.500 13h6" stroke="#777" strokeWidth="2" />
        </svg>
      </button>

      <Annotation />
    </div>

    {/* Vertical scrollbar */}
    <div className="ml-[3px] mt-[2px] flex w-[19px] flex-col bg-[#dadada]">
      <button aria-label="向上滚动" className="flex h-[19px] items-center justify-center border border-[#ababab] bg-white">
        <svg width="9" height="5" viewBox="0 0 9 5"><path d="M0 5h9L4.500 0z" fill="#666" /></svg>
      </button>
      <div className="flex-1 border border-[#ababab] bg-white"></div>
      <button aria-label="向下滚动" className="mt-[23px] flex h-[19px] items-center justify-center border border-[#ababab] bg-white">
        <svg width="9" height="5" viewBox="0 0 9 5"><path d="M0 0h9L4.500 5z" fill="#666" /></svg>
      </button>
    </div>
  </main>
);

const SheetTabs = () => (
  <div className="flex h-7 shrink-0 items-center pr-[25px]">
    <button aria-label="上一个工作表" className="ml-[28px]">
      <svg width="5" height="10" viewBox="0 0 5 10"><path d="M5 0v10L0 5z" fill="#c0c0c0" /></svg>
    </button>
    <button aria-label="下一个工作表" className="ml-6">
      <svg width="5" height="10" viewBox="0 0 5 10"><path d="M0 0v10l5-5z" fill="#c0c0c0" /></svg>
    </button>
    <button className="relative -mt-px ml-[41px] h-[26px] w-[82px] self-start border-b-2 border-l border-r border-b-[#217346] border-l-[#999] border-r-[#999] bg-white pb-1 text-[17px] font-medium leading-5 text-[#217346]">
      Sheet1
    </button>
    <button aria-label="新工作表" className="ml-[33px]">
      <svg width="20" height="20" viewBox="0 0 20 20" fill="none" stroke="#777">
        <circle cx="10" cy="10" r="9.300" strokeWidth="1.200" />
        <path d="M10 5v10M5 10h10" strokeWidth="2" />
      </svg>
    </button>
    <div className="ml-auto flex w-[746px] items-center pb-px">
      <Grip />
      <div className="ml-[15px] flex h-[19px] flex-1 bg-[#dadada]">
        <button aria-label="向左滚动" className="flex w-[19px] items-center justify-center border border-[#ababab] bg-white">
          <svg width="5" height="9" viewBox="0 0 5 9"><path d="M5 0v9L0 4.500z" fill="#666" /></svg>
        </button>
        <div className="flex-1 border border-[#ababab] bg-white"></div>
        <button aria-label="向右滚动" className="ml-[30px] flex w-[19px] items-center justify-center border border-[#ababab] bg-white">
          <svg width="5" height="9" viewBox="0 0 5 9"><path d="M0 0v9l5-4.500z" fill="#666" /></svg>
        </button>
      </div>
    </div>
  </div>
);

const StatusBar = ({ zoom, onZoom }: { zoom: number; onZoom: (value: number) => void }) => (
  <footer className="flex h-[29px] shrink-0 items-center border-t border-[#c6c6c6] bg-[#f3f3f3] pb-[2px] pl-[10px] pr-[10px] text-[15px] text-[#333]">
    <span>就绪</span>
    <button aria-label="普通" className="ml-auto flex h-[26px] w-[50px] items-center justify-center bg-[#c6c6c6]">
      <svg width="16" height="16" viewBox="0 0 16 16" fill="none" stroke="#666" shapeRendering="crispEdges">
        <path d="M0.500 0.500h15v15H0.500zM0.500 5.500h15M0.500 10.500h15M5.500 0.500v15M10.500 0.500v15" />
      </svg>
    </button>
    <button aria-label="页面布局" className="flex h-[26px] w-[50px] items-center justify-center">
      <svg width="17" height="15" viewBox="0 0 17 15" fill="none" stroke="#666" shapeRendering="crispEdges">
        <path d="M0.500 0.500h16v14H0.500zM4.500 2.500h8v10h-8zM6 5.500h5M6 7.500h5M6 9.500h5" />
      </svg>
    </button>
    <button aria-label="分页预览" className="flex h-[26px] w-[50px] items-center justify-center">
      <svg width="17" height="15" viewBox="0 0 17 15" fill="none" stroke="#666" shapeRendering="crispEdges">
        <path d="M0.500 0.500h16v14H0.500zM5.500 0.500v9M10.500 0.500v9M0.500 9.500h10" />
      </svg>
    </button>
    <button aria-label="缩小" className="ml-[7px] h-px w-[10px] bg-[#444]"></button>
    <input
      type="range"
      aria-label="显示比例"
      min={10}
      max={190}
      value={zoom}
      onChange={(e) => onZoom(Number(e.target.value))}
      className="ml-[6px] h-4 w-[125px] appearance-none bg-[linear-gradient(#b0b0b0,#b0b0b0)] bg-[length:100%_1px] bg-center bg-no-repeat [&::-webkit-slider-thumb]:h-[14px] [&::-webkit-slider-thumb]:w-[6px] [&::-webkit-slider-thumb]:appearance-none [&::-webkit-slider-thumb]:bg-[#6a6a6a]"
    />
    <button aria-label="放大" className="ml-[6px]">
      <svg width="10" height="10" viewBox="0 0 10 10" stroke="#444" shapeRendering="crispEdges">
        <path d="M5.500 0v10M0 5.500h10" />
      </svg>
    </button>
    <span className="w-[57px] text-right text-base leading-6">{zoom}%</span>
  </footer>
);

const Watermark = () => (
  <svg
    width="360"
    height="180"
    viewBox="0 0 360 180"
    className="pointer-events-none absolute bottom-[30px] right-[90px] overflow-visible opacity-80 drop-shadow-[0_0_2px_rgba(0,0,0,0.45)]"
  >
    <g fill="#fff">
      <text x="1" y="113" fontFamily="Liberation Sans" fontSize="80" fontWeight="700">Bai</text>
      <ellipse cx="135" cy="48" rx="13" ry="17" />
      <ellipse cx="159" cy="24" rx="12" ry="17" />
      <ellipse cx="190" cy="25" rx="13" ry="17" transform="rotate(10 190 25)" />
      <ellipse cx="209" cy="55" rx="13" ry="17" />
      <path d="M172 50c-18 0-18 15-32 27-14 11-15 37 8 37 12 1 14-4 25-4s16 6 28 4c21-3 17-28 7-36-14-10-15-28-36-28z" />
      <text x="225" y="109" fontFamily="Noto Sans CJK SC" fontSize="58" fontWeight="900">经验</text>
      <text x="4" y="157" fontFamily="Open Sans" fontSize="40">jingyan.baidu.com</text>
    </g>
    <text x="141" y="102" fontFamily="Liberation Sans" fontSize="48" fontWeight="700" fill="#fff" stroke="#bbb" strokeWidth="1.200">du</text>
  </svg>
);

const App = () => {
  const [activeCell, setActiveCell] = useState('K7');
  const [zoom, setZoom] = useState(100);

  return (
    <div className="relative flex h-screen flex-col overflow-hidden bg-[#e6e6e6] font-['Open_Sans','Noto_Sans_CJK_SC',sans-serif]">
      <div className="bg-[#217346]">
        <TitleBar />
        <TabBar />
      </div>
      <Ribbon />
      <FormulaBar cell={activeCell} onCellChange={setActiveCell} />
      <Sheet />
      <SheetTabs />
      <StatusBar zoom={zoom} onZoom={setZoom} />
      <Watermark />
    </div>
  );
};

export default App;
